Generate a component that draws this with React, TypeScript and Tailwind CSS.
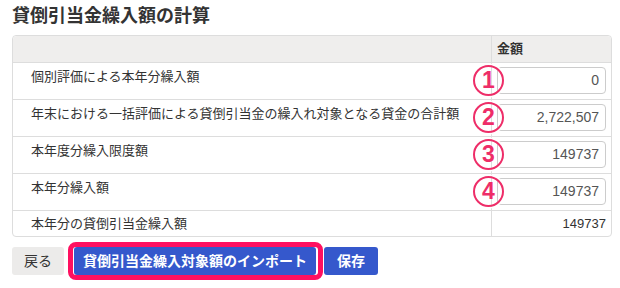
import React from "react";

type Row = {
  label: string;
  value: string;
  badge?: string;
};

const rows: Row[] = [
  { label: "個別評価による本年分繰入額", value: "0", badge: "1" },
  {
    label: "年末における一括評価による貸倒引当金の繰入れ対象となる貸金の合計額",
    value: "2,722,507",
    badge: "2",
  },
  { label: "本年度分繰入限度額", value: "149737", badge: "3" },
  { label: "本年分繰入額", value: "149737", badge: "4" },
];

// pink numbered marker that sits over the input's left edge
const Badge: React.FC<{ n: string }> = ({ n }) => (
  <div className="absolute left-[-19px] top-[2px] w-[31px] h-[31px] rounded-full border-2 border-[#ee2d68] shadow-[0_0_0_1.5px_white] flex items-center justify-center text-[#ee2d68] text-[23px] font-bold leading-none">
    {n}
  </div>
);

const App: React.FC = () => {
  return (
    <div
      className="w-[620px] h-[288px] bg-white px-[12px] pt-[6px] text-[#333]"
      style={{ fontFamily: '"Liberation Sans", "Noto Sans CJK JP", sans-serif' }}
    >
      {/* Title */}
      <h1 className="text-[18px] font-bold leading-[20px] mb-[9px]">貸倒引当金繰入額の計算</h1>

      {/* Table */}
      <div className="w-[600px] border border-[#dddddd] rounded-[4px] overflow-visible">
        {/* Header */}
        <div className="flex h-[27px] bg-[#efeeed] border-b border-[#dddddd] rounded-t-[4px]">
          <div className="flex-1" />
          <div className="w-[120px] border-l border-[#dddddd] pl-[5px] flex items-center text-[13px] font-bold">
            金額
          </div>
        </div>

        {rows.map((r) => (
          <div key={r.label} className="flex h-[37px] border-b border-[#dddddd]">
            <div className="flex-1 pl-[18px] pt-[5px] text-[13px] leading-[18px]">{r.label}</div>
            <div className="relative w-[120px] border-l border-[#dddddd] pl-[5px] pt-[4px]">
              <div className="w-[109px] h-[27px] border border-[#cccccc] rounded-[4px] bg-white flex items-center justify-end pr-[6px] text-[14px] text-[#555]">
                {r.value}
              </div>
              {r.badge && <Badge n={r.badge} />}
            </div>
          </div>
        ))}

        {/* Total row */}
        <div className="flex h-[25px]">
          <div className="flex-1 pl-[18px] flex items-center text-[13px]">本年分の貸倒引当金繰入額</div>
          <div className="w-[120px] border-l border-[#dddddd] pr-[5px] flex items-center justify-end text-[13px]">
            149737
          </div>
        </div>
      </div>

      {/* Buttons */}
      <div className="flex items-center mt-[10px]">
        <button className="h-[28px] px-[12px] bg-[#ecebea] rounded-[3px] text-[14px] text-[#333]">
          戻る
        </button>
        <span className="relative ml-[10px]">
          <button className="h-[28px] w-[242px] bg-[#3558cc] rounded-[3px] text-[14px] font-bold text-white">
            貸倒引当金繰入対象額のインポート
          </button>
          <span className="absolute -left-[6px] -right-[7px] -top-[5px] -bottom-[5px] border-[5px] border-[#ff1060] rounded-[8px] pointer-events-none" />
        </span>
        <button className="ml-[8px] h-[28px] w-[54px] bg-[#3558cc] rounded-[3px] text-[14px] font-bold text-white">
          保存
        </button>
      </div>
    </div>
  );
};

export default App;
